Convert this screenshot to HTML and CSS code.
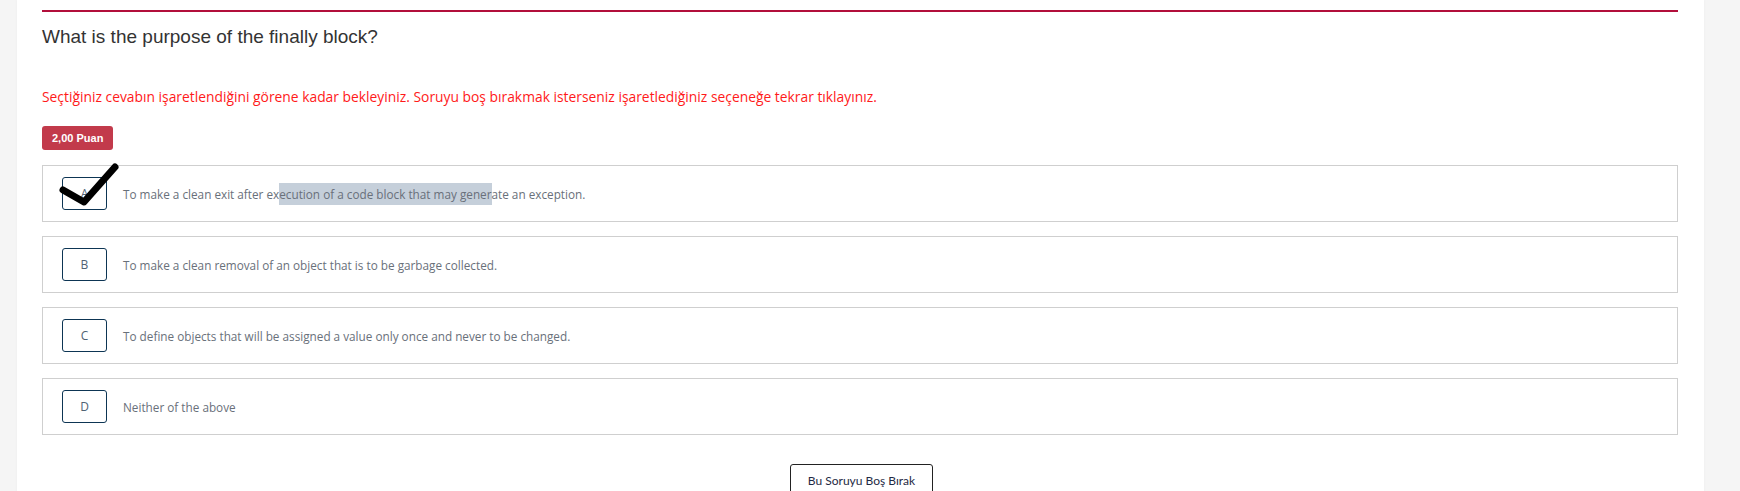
FILE: index.html
```html
<!DOCTYPE html>
<html lang="tr">
<head>
<meta charset="utf-8">
<title>Soru</title>
<link rel="stylesheet" href="styles.css">
</head>
<body>
<div class="page">
  <main class="card">
    <section class="question">
      <h2 class="q-title">What is the purpose of the finally block?</h2>
      <p class="warn">Seçtiğiniz cevabın işaretlendiğini görene kadar bekleyiniz. Soruyu boş bırakmak isterseniz işaretlediğiniz seçeneğe tekrar tıklayınız.</p>
      <span class="badge">2,00 Puan</span>
      <ul class="options">
        <li class="option">
          <span class="letter">A
            <svg class="check" viewBox="0 0 64 48" width="64" height="48" aria-hidden="true"><polyline points="6,28 27,40 58,5" fill="none" stroke="#000" stroke-width="7" stroke-linecap="round" stroke-linejoin="round"/></svg>
          </span>
          <span class="opt-text">To make a clean exit after ex<span class="sel">ecution of a code block that may gener</span>ate an exception.</span>
        </li>
        <li class="option">
          <span class="letter">B</span>
          <span class="opt-text">To make a clean removal of an object that is to be garbage collected.</span>
        </li>
        <li class="option">
          <span class="letter">C</span>
          <span class="opt-text">To define objects that will be assigned a value only once and never to be changed.</span>
        </li>
        <li class="option">
          <span class="letter">D</span>
          <span class="opt-text">Neither of the above</span>
        </li>
      </ul>
      <div class="actions">
        <button class="skip" type="button">Bu Soruyu Boş Bırak</button>
      </div>
    </section>
  </main>
</div>
</body>
</html>
```

FILE: styles.css
```css
html, body {
  margin: 0;
  padding: 0;
  height: 100%;
  overflow: hidden;
}
body {
  background: #f5f5f5;
  font-family: "Open Sans", "Noto Sans", sans-serif;
}
.page {
  display: flex;
  padding: 0 36px 0 17px;
  min-height: 100%;
  box-sizing: border-box;
}
.card {
  flex: 1;
  background: #fff;
  padding: 10px 26px 0 25px;
  box-shadow: 0 0 3px rgba(0,0,0,0.04);
}
.question {
  border-top: 2px solid #b20f3b;
  display: flex;
  flex-direction: column;
  align-items: flex-start;
}
.q-title {
  margin: 14px 0 0;
  font-family: "Liberation Sans", Arial, sans-serif;
  font-weight: normal;
  font-size: 19px;
  line-height: 22px;
  color: #333;
}
.warn {
  margin: 40px 0 0;
  font-size: 13.85px;
  line-height: 18px;
  color: #ff1a1a;
}
.badge {
  margin-top: 20px;
  display: inline-block;
  background: #c23a4b;
  color: #fff;
  font-family: "Liberation Sans", Arial, sans-serif;
  font-weight: bold;
  font-size: 11px;
  line-height: 15px;
  padding: 5px 10px 4px;
  border-radius: 3px;
}
.options {
  list-style: none;
  margin: 15px 0 0;
  padding: 0;
  align-self: stretch;
  display: flex;
  flex-direction: column;
  gap: 14px;
}
.option {
  display: flex;
  align-items: center;
  gap: 16px;
  border: 1px solid #cfcfcf;
  height: 57px;
  box-sizing: border-box;
  padding: 0 19px;
}
.letter {
  position: relative;
  flex: none;
  width: 45px;
  height: 33px;
  box-sizing: border-box;
  border: 1px solid #0d3554;
  border-radius: 3px;
  display: flex;
  align-items: center;
  justify-content: center;
  font-size: 12px;
  color: #506273;
}
.check {
  position: absolute;
  left: -6px;
  top: -16px;
}
.opt-text {
  font-size: 11.75px;
  color: #69707a;
}
.sel {
  background: #c5cfda;
  padding: 3px 0;
}
.actions {
  align-self: stretch;
  display: flex;
  justify-content: center;
  margin-top: 29px;
}
.skip {
  width: 143px;
  background: #fff;
  border: 1px solid #222;
  border-radius: 3px;
  padding: 8px 0;
  font-family: "Lato", "Noto Sans", sans-serif;
  font-size: 12px;
  line-height: 16px;
  color: #1f2a44;
  margin-left: 3px;
}
```
